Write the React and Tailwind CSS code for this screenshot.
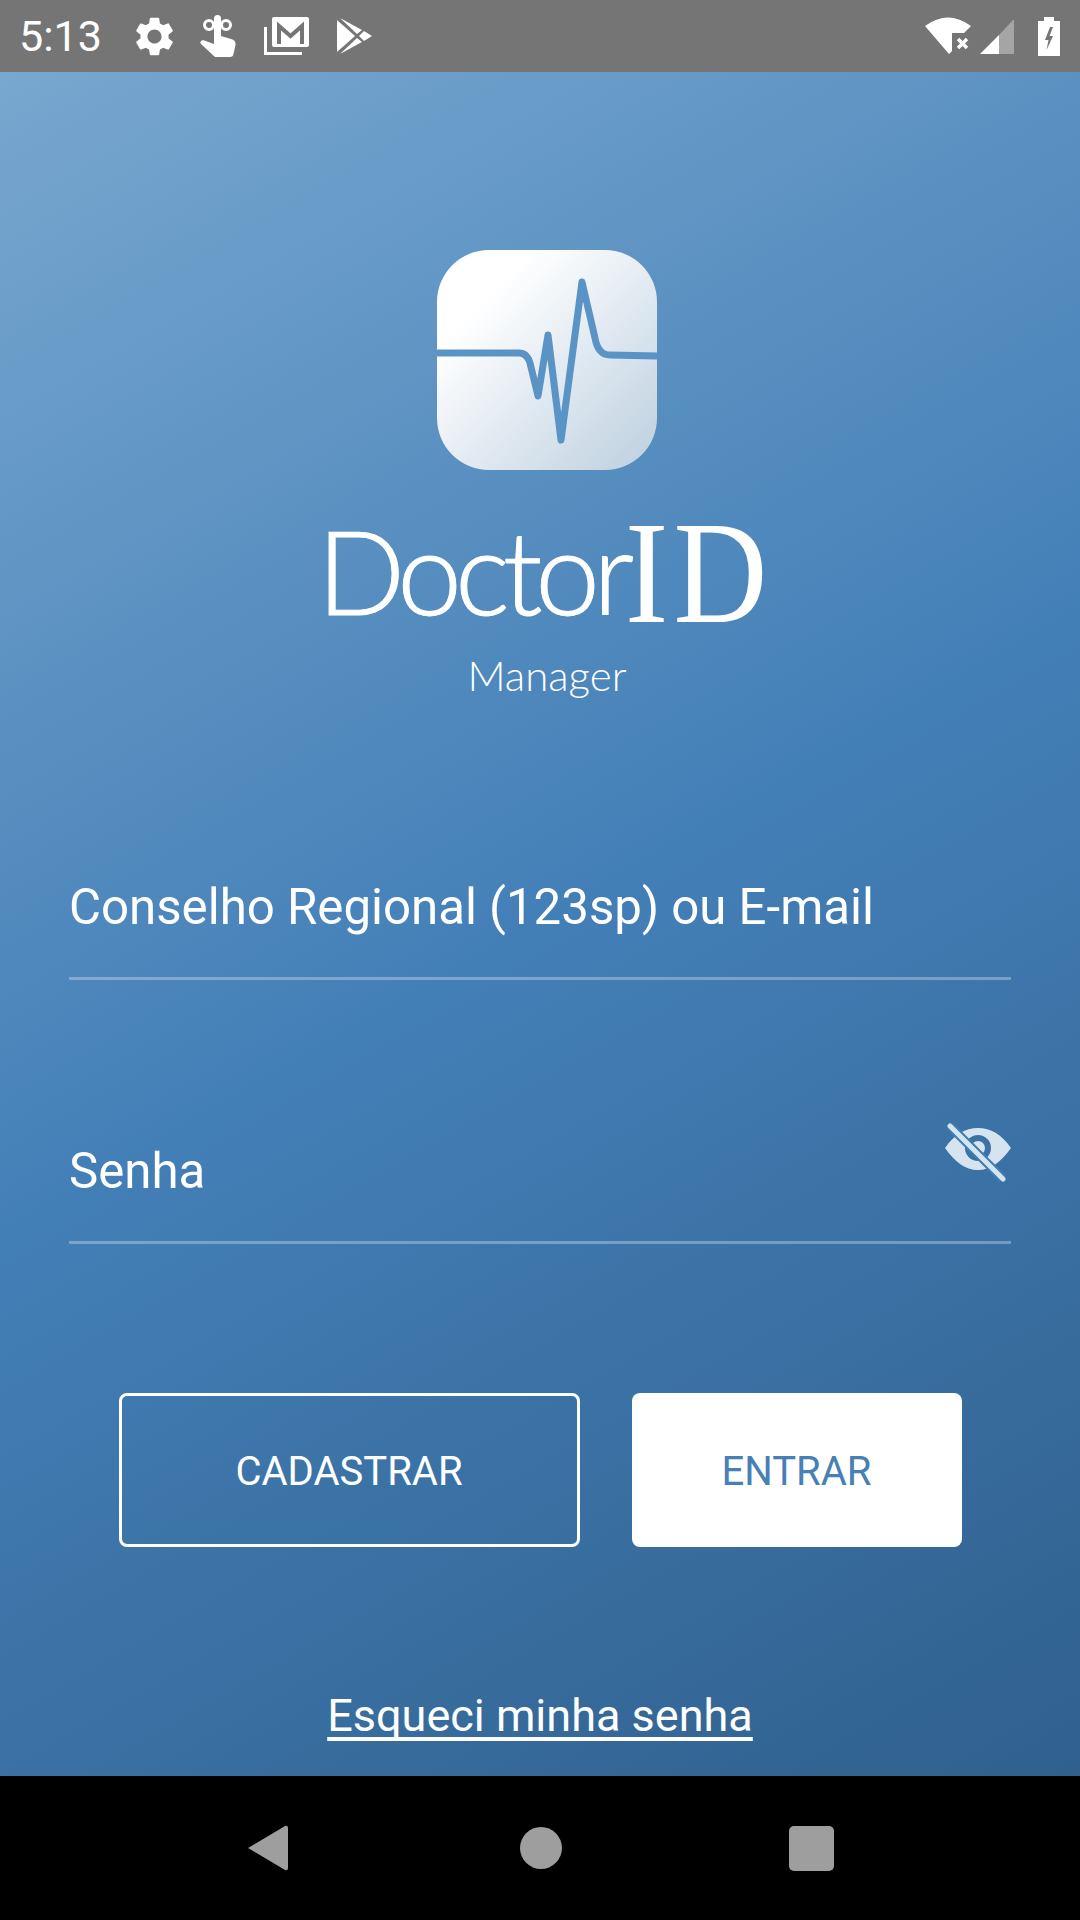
import React from 'react';
import { MdSettings } from 'react-icons/md';

const TouchIcon = () => (
  <svg width="36" height="42" viewBox="0 0 36 42">
    <circle cx="9" cy="10" r="4.500" fill="none" stroke="#fff" strokeWidth="3" />
    <circle cx="26" cy="10" r="4.500" fill="none" stroke="#fff" strokeWidth="3" />
    <circle cx="17.500" cy="3.500" r="3.500" fill="#fff" />
    <path
      fill="#fff"
      d="M14 4H21V21L31 24Q36 25 35.500 30L33.500 39Q33 42 30 42H15L1 29Q-1 26 3 25L14 29Z"
    />
  </svg>
);

const GmailIcon = () => (
  <svg width="45" height="38" viewBox="0 0 45 38">
    <path d="M1.500 10V36.500H38" fill="none" stroke="#fff" strokeWidth="3" />
    <rect x="8" y="0" width="37" height="30" rx="2" fill="#fff" />
    <path d="M15 27V9L26.500 19L38 9V27" fill="none" stroke="#757575" strokeWidth="4" />
  </svg>
);

const PlayIcon = () => (
  <svg width="35" height="36" viewBox="0 0 35 36" fill="#fff">
    <path d="M0 2L18 18L0 34Z" />
    <path d="M3 0L25 12L20 16Z" />
    <path d="M3 36L25 24L20 20Z" />
    <path d="M27 13L35 18L27 23L22 18Z" />
  </svg>
);

const WifiIcon = () => (
  <svg width="47" height="38" viewBox="0 0 47 38">
    <path d="M0 9Q23 -8 46 9L39 16H27V34L24 37Z" fill="#fff" />
    <path d="M33 22L42 31M42 22L33 31" stroke="#fff" strokeWidth="3.500" />
  </svg>
);

const SignalIcon = () => (
  <svg width="34" height="35" viewBox="0 0 34 35">
    <path d="M0 35L19 16V35Z" fill="#fff" />
    <path d="M19 16L33 1Q34 0 34 2V35H19Z" fill="#fff" fillOpacity="0.35" />
  </svg>
);

const BatteryIcon = () => (
  <svg width="22" height="39" viewBox="0 0 22 39">
    <path
      fillRule="evenodd"
      fill="#fff"
      d="M6 0H16V4H22V39H0V4H6ZM12 10L7 23H10.500L8.500 33L15 19H11.500L15 10Z"
    />
  </svg>
);

const PulseLogo = () => (
  <div className="w-[220px] h-[220px] rounded-[52px] bg-gradient-to-br from-white from-[22%] to-[#bccfdf] overflow-hidden">
    <svg width="220" height="220" viewBox="0 0 220 220">
      <path
        d="M0 103H82Q90 103 93 113L101 146L111 85L124 190L145 32L158 88Q161 105 173 105L220 106"
        fill="none"
        stroke="#5a93c5"
        strokeWidth="7"
        strokeLinejoin="round"
      />
    </svg>
  </div>
);

const EyeOff = () => (
  <svg width="70" height="60" viewBox="0 0 70 60">
    <path
      fillRule="evenodd"
      fill="#d6e4ef"
      d="M2 25C12 11 22 5 35 5S58 11 68 25C58 39 48 47 35 47S12 39 2 25ZM35 12A13 13 0 1 0 35 38A13 13 0 1 0 35 12Z"
    />
    <circle cx="35" cy="25" r="7" fill="#d6e4ef" />
    <path d="M7 3L60 56" stroke="#3f7cb0" strokeWidth="9" />
    <path d="M7 3L60 56" stroke="#d6e4ef" strokeWidth="5" strokeLinecap="round" />
  </svg>
);

const App = () => {
  return (
    <div className="flex flex-col w-[1080px] h-[1920px] overflow-hidden font-['Roboto',sans-serif]">
      {/* Status bar */}
      <div className="flex items-center h-[72px] bg-[#757575] text-white pl-[19px] shrink-0">
        <span className="text-[43px] leading-none w-[82px]">5:13</span>
        <div className="flex items-center ml-[34px] w-[43px]">
          <MdSettings size={47} className="-ml-[4px] shrink-0" />
        </div>
        <div className="ml-[22px]"><TouchIcon /></div>
        <div className="ml-[28px]"><GmailIcon /></div>
        <div className="ml-[28px]"><PlayIcon /></div>
        <div className="flex items-center gap-[8px] ml-auto pr-[20px]">
          <WifiIcon />
          <SignalIcon />
          <div className="ml-[16px]"><BatteryIcon /></div>
        </div>
      </div>

      {/* Main Content */}
      <div className="flex-1 flex flex-col items-center bg-[linear-gradient(150deg,#78a7cf_0%,#437fb7_50%,#30608d_100%)] text-white">
        <div className="mt-[178px] ml-[14px]">
          <PulseLogo />
        </div>

        <div className="flex items-end self-start h-[100px] mt-[51px] ml-[317px] leading-none">
          <span className="w-[308px] font-['Lato',sans-serif] font-light text-[116px] leading-[100px] tracking-[-7px] pt-[8px] [-webkit-text-stroke:1px_white]">Doctor</span>
          <span className="inline-block origin-left scale-x-[0.89] translate-y-[2px] font-['Liberation_Serif',serif] text-[146px] leading-[100px] tracking-[6px] whitespace-nowrap">ID</span>
        </div>
        <div className="font-['Lato',sans-serif] font-light text-[42px] leading-none mt-[33px] ml-[14px]">Manager</div>

        <div className="w-[942px] mt-[172px]">
          <div className="flex items-center h-[112px] border-b-[3px] border-white/30 pb-[29px]">
            <span className="text-[49.2px] leading-none">Conselho Regional (123sp) ou E-mail</span>
          </div>
          <div className="flex items-end justify-between h-[166px] mt-[98px] border-b-[3px] border-white/30 pb-[45px]">
            <span className="text-[49.2px] leading-none">Senha</span>
            <div className="mb-[13px] -mr-[2px]"><EyeOff /></div>
          </div>
        </div>

        <div className="flex gap-[52px] mt-[149px] text-[40px]">
          <button className="flex items-center justify-center w-[461px] h-[154px] pt-[3px] border-[3px] border-white rounded-[8px]">CADASTRAR</button>
          <button className="flex items-center justify-center w-[330px] h-[154px] pt-[3px] bg-white text-[#4680b4] rounded-[8px]">ENTRAR</button>
        </div>

        <a className="text-[45px] leading-none underline underline-offset-[6px] [text-decoration-skip-ink:none] mt-[146px]">Esqueci minha senha</a>
      </div>

      {/* Nav bar */}
      <div className="flex items-center justify-center h-[144px] bg-black shrink-0">
        <svg width="43" height="48" viewBox="0 0 43 48">
          <path d="M39 2L2 24L39 46Q42 47 42 44V4Q42 1 39 2Z" fill="#9e9e9e" />
        </svg>
        <div className="w-[42px] h-[42px] rounded-full bg-[#9e9e9e] ml-[231px]"></div>
        <div className="w-[45px] h-[45px] rounded-[5px] bg-[#9e9e9e] ml-[227px]"></div>
      </div>
    </div>
  );
};

export default App;
